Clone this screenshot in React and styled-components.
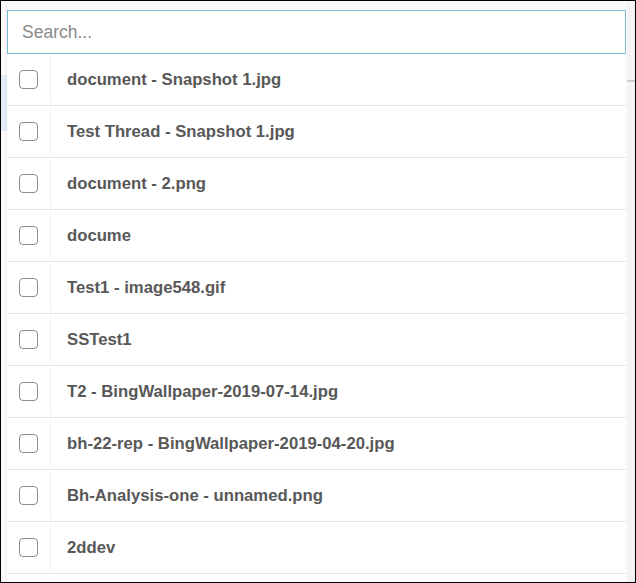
import React from 'react'
import styled, { createGlobalStyle } from 'styled-components'

const GlobalStyle = createGlobalStyle`
  html, body {
    margin: 0;
    padding: 0;
    background: #fff;
  }
  * { box-sizing: border-box; }
`

const Frame = styled.div`
  width: 636px;
  height: 583px;
  border: 1px solid #000;
  display: flex;
  overflow: hidden;
  background: #fbf9fb;
`

const LeftEdge = styled.div`
  width: 6px;
  flex-shrink: 0;
  display: flex;
  flex-direction: column;
  padding-top: 74px;
`

const EdgeHighlight = styled.div`
  height: 56px;
  background: #e4edf5;
`

const Panel = styled.div`
  flex: 1;
  display: flex;
  flex-direction: column;
  padding-top: 9px;
  background: linear-gradient(#fbf9fb 0, #fbf9fb 9px, #fff 9px);
  box-shadow: -1px 0 2px rgba(0, 0, 0, 0.06);
`

const SearchInput = styled.input`
  display: block;
  width: 100%;
  height: 44px;
  border: 1px solid #7fbcd6;
  padding: 0 14px;
  font-family: 'Liberation Sans', Arial, sans-serif;
  font-size: 17.5px;
  color: #444;
  outline: none;
  background: #fff;
  &::placeholder {
    color: #8a8a8a;
  }
`

const List = styled.div`
  display: flex;
  flex-direction: column;
`

const Row = styled.div`
  display: flex;
  align-items: stretch;
  height: 52px;
  border-bottom: 1px solid #e4e4e4;
`

const CheckCell = styled.div`
  width: 44px;
  display: flex;
  align-items: center;
  justify-content: center;
  padding-right: 1px;
  margin: 3px 0;
  border-right: 1px solid #ececec;
`

const Box = styled.span`
  width: 19px;
  height: 19px;
  border: 1.5px solid #8c8c8c;
  border-radius: 4px;
  background: #fff;
`

const Label = styled.div`
  display: flex;
  align-items: center;
  padding-left: 16px;
  font-family: 'Liberation Sans', Arial, sans-serif;
  font-weight: 700;
  font-size: 16.7px;
  color: #585858;
`

const Scrollbar = styled.div`
  width: 8px;
  flex-shrink: 0;
  background: #f4f4f4;
  padding-top: 79px;
  margin-left: 1px;
`

const ScrollMark = styled.div`
  height: 2px;
  background: #cfcfcf;
`

const items = [
  'document - Snapshot 1.jpg',
  'Test Thread - Snapshot 1.jpg',
  'document - 2.png',
  'docume',
  'Test1 - image548.gif',
  'SSTest1',
  'T2 - BingWallpaper-2019-07-14.jpg',
  'bh-22-rep - BingWallpaper-2019-04-20.jpg',
  'Bh-Analysis-one - unnamed.png',
  '2ddev',
]

const App = () => {
  return (
    <>
      <GlobalStyle />
      <Frame>
        <LeftEdge>
          <EdgeHighlight />
        </LeftEdge>
        <Panel>
          <SearchInput placeholder="Search..." />
          <List>
            {items.map(item => (
              <Row key={item}>
                <CheckCell>
                  <Box />
                </CheckCell>
                <Label>{item}</Label>
              </Row>
            ))}
          </List>
        </Panel>
        <Scrollbar>
          <ScrollMark />
        </Scrollbar>
      </Frame>
    </>
  )
}

export default App
